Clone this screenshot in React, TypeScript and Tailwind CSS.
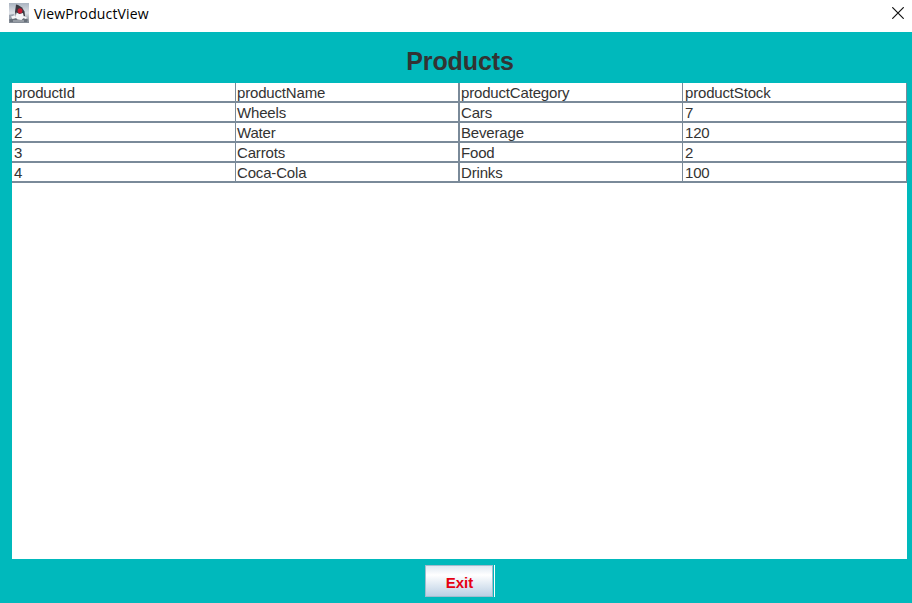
const rows = [
  ['productId', 'productName', 'productCategory', 'productStock'],
  ['1', 'Wheels', 'Cars', '7'],
  ['2', 'Water', 'Beverage', '120'],
  ['3', 'Carrots', 'Food', '2'],
  ['4', 'Coca-Cola', 'Drinks', '100'],
];

const cellStyles = ['border-r pl-0.5', 'border-r-2 pl-px', 'border-r pl-px', 'border-r pl-0.5'];

function JavaIcon() {
  return (
    <svg width="20" height="20" viewBox="0 0 20 20" className="shrink-0">
      <defs>
        <linearGradient id="tile" x1="0" y1="0" x2="0" y2="1">
          <stop offset="0" stopColor="#a9b3c0" />
          <stop offset="0.5" stopColor="#dde1e7" />
          <stop offset="1" stopColor="#7f8791" />
        </linearGradient>
      </defs>
      <rect width="20" height="20" fill="url(#tile)" />
      <path d="M0 12l5-1-1 4-4 1z" fill="#9aa2ad" />
      <path d="M0 16.500l5-1.500 10 0 4 1.500-1 2.500H1z" fill="#68707a" />
      <path d="M7 1.500L9 2l4 2.500 2.500 4 .5 4.500-2 1-7-1-1-4z" fill="#383840" />
      <path d="M7.500 9.500l3 1.500 3.500-1 1 4.500-2.500 2.500-4-.5-2-2z" fill="#f4f5f7" />
      <path d="M2 13.500l3.500-1 2 2.500-4 1zM14.500 13l3.500 1.500-1 1.500-3-1z" fill="#f5f6f8" />
      <ellipse cx="11" cy="7.800" rx="2.400" ry="2.600" fill="#c51c32" />
      <path d="M4 18h11" stroke="#c3c8ce" />
    </svg>
  );
}

export default function App() {
  return (
    <div className="flex h-[603px] w-[912px] flex-col overflow-hidden bg-[#00b9bc] font-['Liberation_Sans',Arial,sans-serif]">
      <header className="flex h-8 shrink-0 items-start bg-white pl-[9px] pr-2 pt-[3px]">
        <JavaIcon />
        <span className="ml-[5px] font-['Open_Sans','Noto_Sans',sans-serif] text-[14px] leading-[21px] tracking-[0.14px] text-black">
          ViewProductView
        </span>
        <button aria-label="Close" className="ml-auto mt-[4px]">
          <svg width="12" height="12" viewBox="0 0 12 12" className="block">
            <path d="M.3.3l11.400 11.400M11.700.3L.3 11.700" stroke="#111" strokeWidth="1.200" />
          </svg>
        </button>
      </header>
      <h1 className="mt-[15px] h-9 shrink-0 pl-2 text-center text-[25px] font-bold leading-[29px] tracking-[-0.1px] text-[#333333]">
        Products
      </h1>
      <main className="ml-3 h-[476px] w-[895px] shrink-0 bg-white">
        {rows.map((row) => (
          <div key={row[0]} className="grid h-5 grid-cols-[224px_224px_223px_224px] border-b-2 border-[#7a8a99]">
            {row.map((text, i) => (
              <div key={i} className={`${cellStyles[i]} border-[#7a8a99] text-[15px] leading-[20px] tracking-[-0.17px] text-[#333333]`}>
                {text}
              </div>
            ))}
          </div>
        ))}
      </main>
      <footer className="flex pl-[425px] pt-[6px]">
        <button className="flex h-8 w-[70px] border-r border-white pr-px">
          <span className="flex h-8 w-full items-center justify-center border border-[#a3bccd] bg-linear-to-b from-[#dfe8f2] via-white via-30% to-[#bcd0e4] pl-px pt-[4px] text-[15px] font-bold text-[#e60012]">
            Exit
          </span>
        </button>
      </footer>
    </div>
  );
}
